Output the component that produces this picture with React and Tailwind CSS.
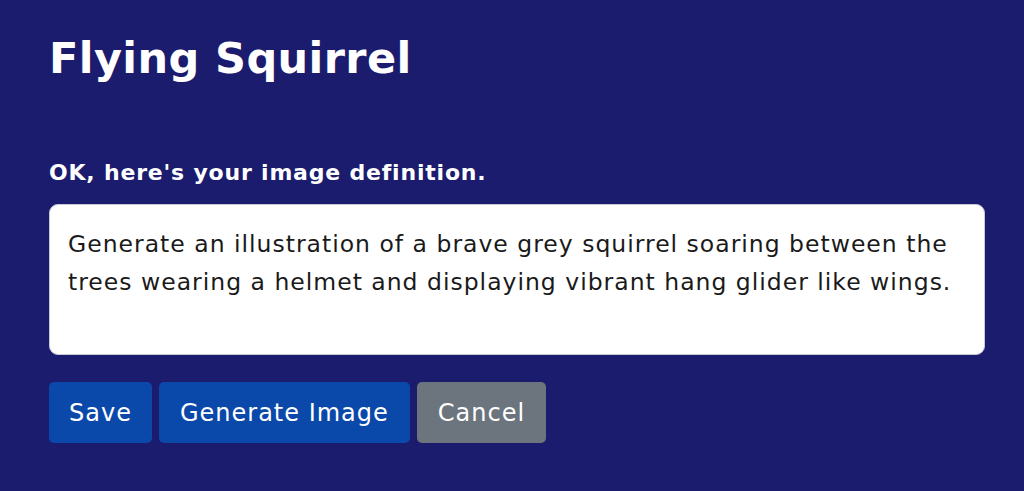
export default function App() {
  const font = { fontFamily: '"DejaVu Sans", "Noto Sans", sans-serif' };
  return (
    <div className="w-[1024px] h-[491px] bg-[#1b1c6d] text-white px-[49px] pt-[26px]" style={font}>
      <h1 className="text-[43px] font-bold leading-[64px] m-0 tracking-[0.4px]">Flying Squirrel</h1>
      <div className="mt-[69px] text-[22px] font-bold leading-[28px] tracking-[0.8px]">OK, here's your image definition.</div>
      <div className="mt-[17px] w-[936px] h-[151px] bg-white rounded-[9px] border border-[#c8cbd6] px-[18px] pt-[20px] text-[#1a1a1a] text-[23.5px] leading-[38px] tracking-[1px] whitespace-nowrap">
        Generate an illustration of a brave grey squirrel soaring between the<br />trees wearing a helmet and displaying vibrant hang glider like wings.
      </div>
      <div className="mt-[27px] flex gap-[7px]">
        <button className="h-[61px] px-[20px] rounded-[5px] bg-[#0a48a9] text-white text-[24px] tracking-[1px]">Save</button>
        <button className="h-[61px] px-[21px] rounded-[5px] bg-[#0a48a9] text-white text-[24px] tracking-[1px]">Generate Image</button>
        <button className="h-[61px] px-[21px] rounded-[5px] bg-[#6c757d] text-white text-[24px] tracking-[1px]">Cancel</button>
      </div>
    </div>
  );
}
